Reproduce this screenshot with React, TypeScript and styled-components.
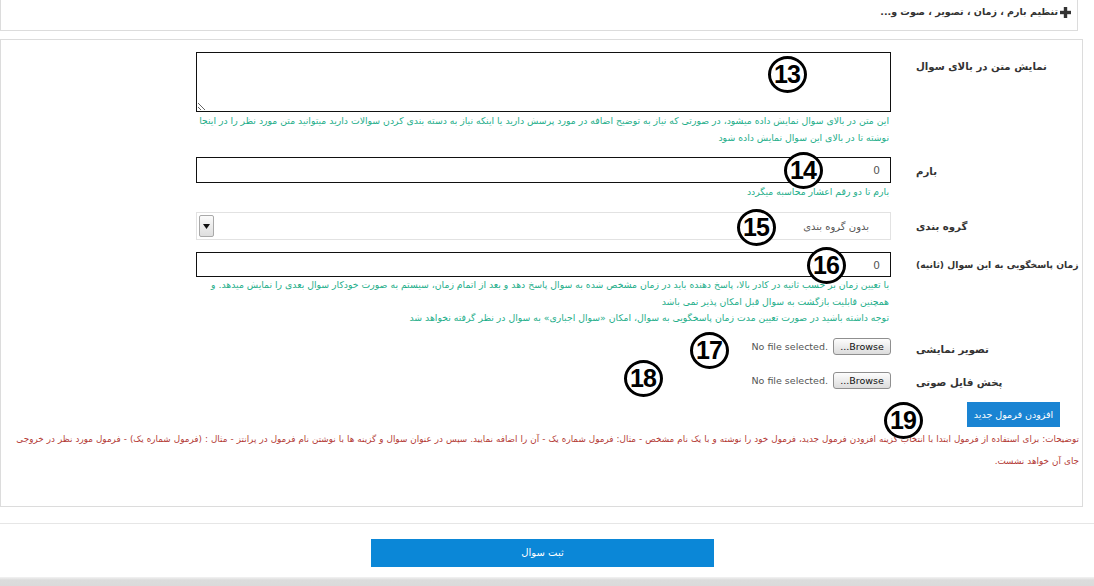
import React from "react";
import styled, { createGlobalStyle } from "styled-components";

const GlobalStyle = createGlobalStyle`
  html, body { margin: 0; padding: 0; background: #fff; }
  body { font-family: "DejaVu Sans", Tahoma, sans-serif; color: #333; overflow: hidden; }
  * { box-sizing: border-box; }
`;

const Page = styled.div`
  position: relative;
  width: 1094px;
  height: 586px;
  overflow: hidden;
  direction: rtl;
`;

const TopPanel = styled.div`
  height: 31px;
  margin-right: 16px;
  border: 1px solid #dcdcdc;
  border-top: none;
  display: flex;
  align-items: flex-start;
  padding: 4px 6px 0 0;
`;

const TopTitle = styled.div`
  display: flex;
  align-items: center;
  gap: 2px;
  font-size: 9.5px;
  font-weight: bold;
  color: #333;
  line-height: 16px;
`;

const FormPanel = styled.div`
  margin-top: 8px;
  margin-right: 11px;
  border: 1px solid #dcdcdc;
  padding: 12px 0 34px 0;
  display: flex;
  flex-direction: column;
`;

const FieldRow = styled.div<{ $mt?: number }>`
  display: grid;
  grid-template-columns: 176px 695px;
  column-gap: 15px;
  justify-content: start;
  margin-top: ${(p) => p.$mt ?? 0}px;
`;

const Label = styled.div<{ $pt?: number; $fs?: number }>`
  text-align: left;
  padding-left: 10px;
  padding-top: ${(p) => p.$pt ?? 6}px;
  font-size: ${(p) => p.$fs ?? 10.2}px;
  font-weight: bold;
  line-height: 17px;
  color: #333;
  white-space: nowrap;
`;

const Field = styled.div`
  display: flex;
  flex-direction: column;
`;

const TextArea = styled.textarea`
  display: block;
  width: 695px;
  height: 60px;
  border: 1px solid #111;
  resize: vertical;
  margin: 0;
  font-family: inherit;
  font-size: 11px;
`;

const TextInput = styled.input<{ $h: number }>`
  display: block;
  width: 695px;
  height: ${(p) => p.$h}px;
  border: 1px solid #111;
  margin: 0;
  padding: 0 10px;
  font-family: inherit;
  font-size: 10.5px;
  color: #555;
  text-align: right;
  outline: none;
`;

const Help = styled.div<{ $lh?: number }>`
  font-size: 9.3px;
  line-height: ${(p) => p.$lh ?? 17}px;
  color: #1eae8a;
  padding-right: 2px;
`;

const SelectBox = styled.div`
  width: 695px;
  height: 28px;
  border: 1px solid #e2e2e2;
  display: flex;
  align-items: center;
  justify-content: space-between;
  padding: 0 21px 0 2px;
  font-size: 10px;
  color: #555;
`;

const SelectArrow = styled.div`
  width: 15px;
  height: 22px;
  border: 1px solid #a9a9a9;
  border-radius: 2px;
  background: linear-gradient(#fbfbfb, #dedede);
  display: flex;
  align-items: center;
  justify-content: center;
`;

const FileControl = styled.div`
  display: flex;
  align-items: center;
  gap: 5px;
  height: 17px;
`;

const BrowseButton = styled.div`
  direction: ltr;
  width: 58px;
  height: 17px;
  border: 1px solid #8f8f8f;
  border-radius: 3px;
  background: linear-gradient(#fdfdfd, #dcdcdc);
  font-size: 9.5px;
  line-height: 15px;
  text-align: center;
  color: #111;
`;

const FileStatus = styled.span`
  direction: ltr;
  font-size: 9.5px;
  color: #555;
`;

const ActionRow = styled.div`
  display: flex;
  padding-right: 22px;
  margin-top: 11px;
`;

const BlueButton = styled.div`
  width: 93px;
  height: 25px;
  background: #1a84d3;
  color: #fff;
  font-size: 9.5px;
  line-height: 25px;
  text-align: center;
`;

const Notes = styled.div`
  padding: 1px 3px 0 3px;
  font-size: 8.8px;
  line-height: 22px;
  word-spacing: 0.25px;
  color: #b33a35;
`;

const SubmitBar = styled.div`
  margin-top: 16px;
  border-top: 1px solid #e6e6e6;
  padding: 15px 9px 10px 0;
  display: flex;
  justify-content: center;
`;

const SubmitButton = styled.div`
  width: 343px;
  height: 28px;
  background: #0b87d7;
  color: #fff;
  font-size: 10px;
  line-height: 28px;
  text-align: center;
`;

const Footer = styled.div`
  height: 20px;
  background: linear-gradient(#f3f3f3 0px, #dcdcdc 3px, #d6d6d6 100%);
`;

const Marker = styled.div`
  position: absolute;
  width: 39px;
  height: 37px;
  border: 3.5px solid #000;
  border-radius: 50%;
  background: #fff;
  display: flex;
  align-items: center;
  justify-content: center;
  font-family: "Liberation Sans Narrow", "Liberation Sans", Arial, sans-serif;
  font-weight: bold;
  font-size: 25px;
  letter-spacing: -1px;
  color: #000;
  direction: ltr;
`;

const Plus = () => (
  <svg width="11" height="11" viewBox="0 0 11 11">
    <rect x="3.8" y="0" width="3.4" height="11" fill="#333" />
    <rect x="0" y="3.8" width="11" height="3.4" fill="#333" />
  </svg>
);

const Arrow = () => (
  <svg width="7" height="5" viewBox="0 0 7 5">
    <polygon points="0,0 7,0 3.5,5" fill="#111" />
  </svg>
);

const markers = [
  { n: 13, x: 787, y: 74 },
  { n: 14, x: 803, y: 170 },
  { n: 15, x: 756, y: 227 },
  { n: 16, x: 826, y: 265 },
  { n: 17, x: 709, y: 350 },
  { n: 18, x: 643, y: 378 },
  { n: 19, x: 903, y: 420 },
];

export default function App() {
  return (
    <>
      <GlobalStyle />
      <Page dir="rtl">
        <TopPanel>
          <TopTitle>
            <Plus />
            <span>تنظیم بارم ، زمان ، تصویر ، صوت و...</span>
          </TopTitle>
        </TopPanel>

        <FormPanel>
          <FieldRow>
            <Label>نمایش متن در بالای سوال</Label>
            <Field>
              <TextArea />
              <Help>
                این متن در بالای سوال نمایش داده میشود، در صورتی که نیاز به توضیح اضافه در مورد پرسش دارید یا اینکه نیاز به دسته بندی کردن سوالات دارید میتوانید متن مورد نظر را در اینجا نوشته تا در بالای این سوال نمایش داده شود
              </Help>
            </Field>
          </FieldRow>

          <FieldRow $mt={11}>
            <Label>بارم</Label>
            <Field>
              <TextInput $h={26} defaultValue="0" />
              <Help>بارم تا دو رقم اعشار محاسبه میگردد</Help>
            </Field>
          </FieldRow>

          <FieldRow $mt={12}>
            <Label>گروه بندی</Label>
            <Field>
              <SelectBox>
                <span>بدون گروه بندی</span>
                <SelectArrow>
                  <Arrow />
                </SelectArrow>
              </SelectBox>
            </Field>
          </FieldRow>

          <FieldRow $mt={12}>
            <Label $pt={4} $fs={9.2}>زمان پاسخگویی به این سوال (ثانیه)</Label>
            <Field>
              <TextInput $h={25} defaultValue="0" />
              <Help $lh={16.5}>
                با تعیین زمان بر حسب ثانیه در کادر بالا، پاسخ دهنده باید در زمان مشخص شده به سوال پاسخ دهد و بعد از اتمام زمان، سیستم به صورت خودکار سوال بعدی را نمایش میدهد. و همچنین قابلیت بازگشت به سوال قبل امکان پذیر نمی باشد
                <br />
                توجه داشته باشید در صورت تعیین مدت زمان پاسخگویی به سوال، امکان «سوال اجباری» به سوال در نظر گرفته نخواهد شد
              </Help>
            </Field>
          </FieldRow>

          <FieldRow $mt={11}>
            <Label $pt={3}>تصویر نمایشی</Label>
            <Field>
              <FileControl>
                <BrowseButton>...Browse</BrowseButton>
                <FileStatus>No file selected.</FileStatus>
              </FileControl>
            </Field>
          </FieldRow>

          <FieldRow $mt={14}>
            <Label $pt={2}>پخش فایل صوتی</Label>
            <Field>
              <FileControl>
                <BrowseButton>...Browse</BrowseButton>
                <FileStatus>No file selected.</FileStatus>
              </FileControl>
            </Field>
          </FieldRow>

          <ActionRow>
            <BlueButton>افزودن فرمول جدید</BlueButton>
          </ActionRow>

          <Notes>
            توضیحات: برای استفاده از فرمول ابتدا با انتخاب گزینه افزودن فرمول جدید، فرمول خود را نوشته و با یک نام مشخص - مثال: فرمول شماره یک - آن را اضافه نمایید. سپس در عنوان سوال و گزینه ها با نوشتن نام فرمول در پرانتز - مثال : (فرمول شماره یک) - فرمول مورد نظر در خروجی
            <br />
            جای آن خواهد نشست.
          </Notes>
        </FormPanel>

        <SubmitBar>
          <SubmitButton>ثبت سوال</SubmitButton>
        </SubmitBar>
        <Footer />

        {markers.map((m) => (
          <Marker key={m.n} style={{ left: m.x - 19.5, top: m.y - 18.5 }}>
            {m.n}
          </Marker>
        ))}
      </Page>
    </>
  );
}
